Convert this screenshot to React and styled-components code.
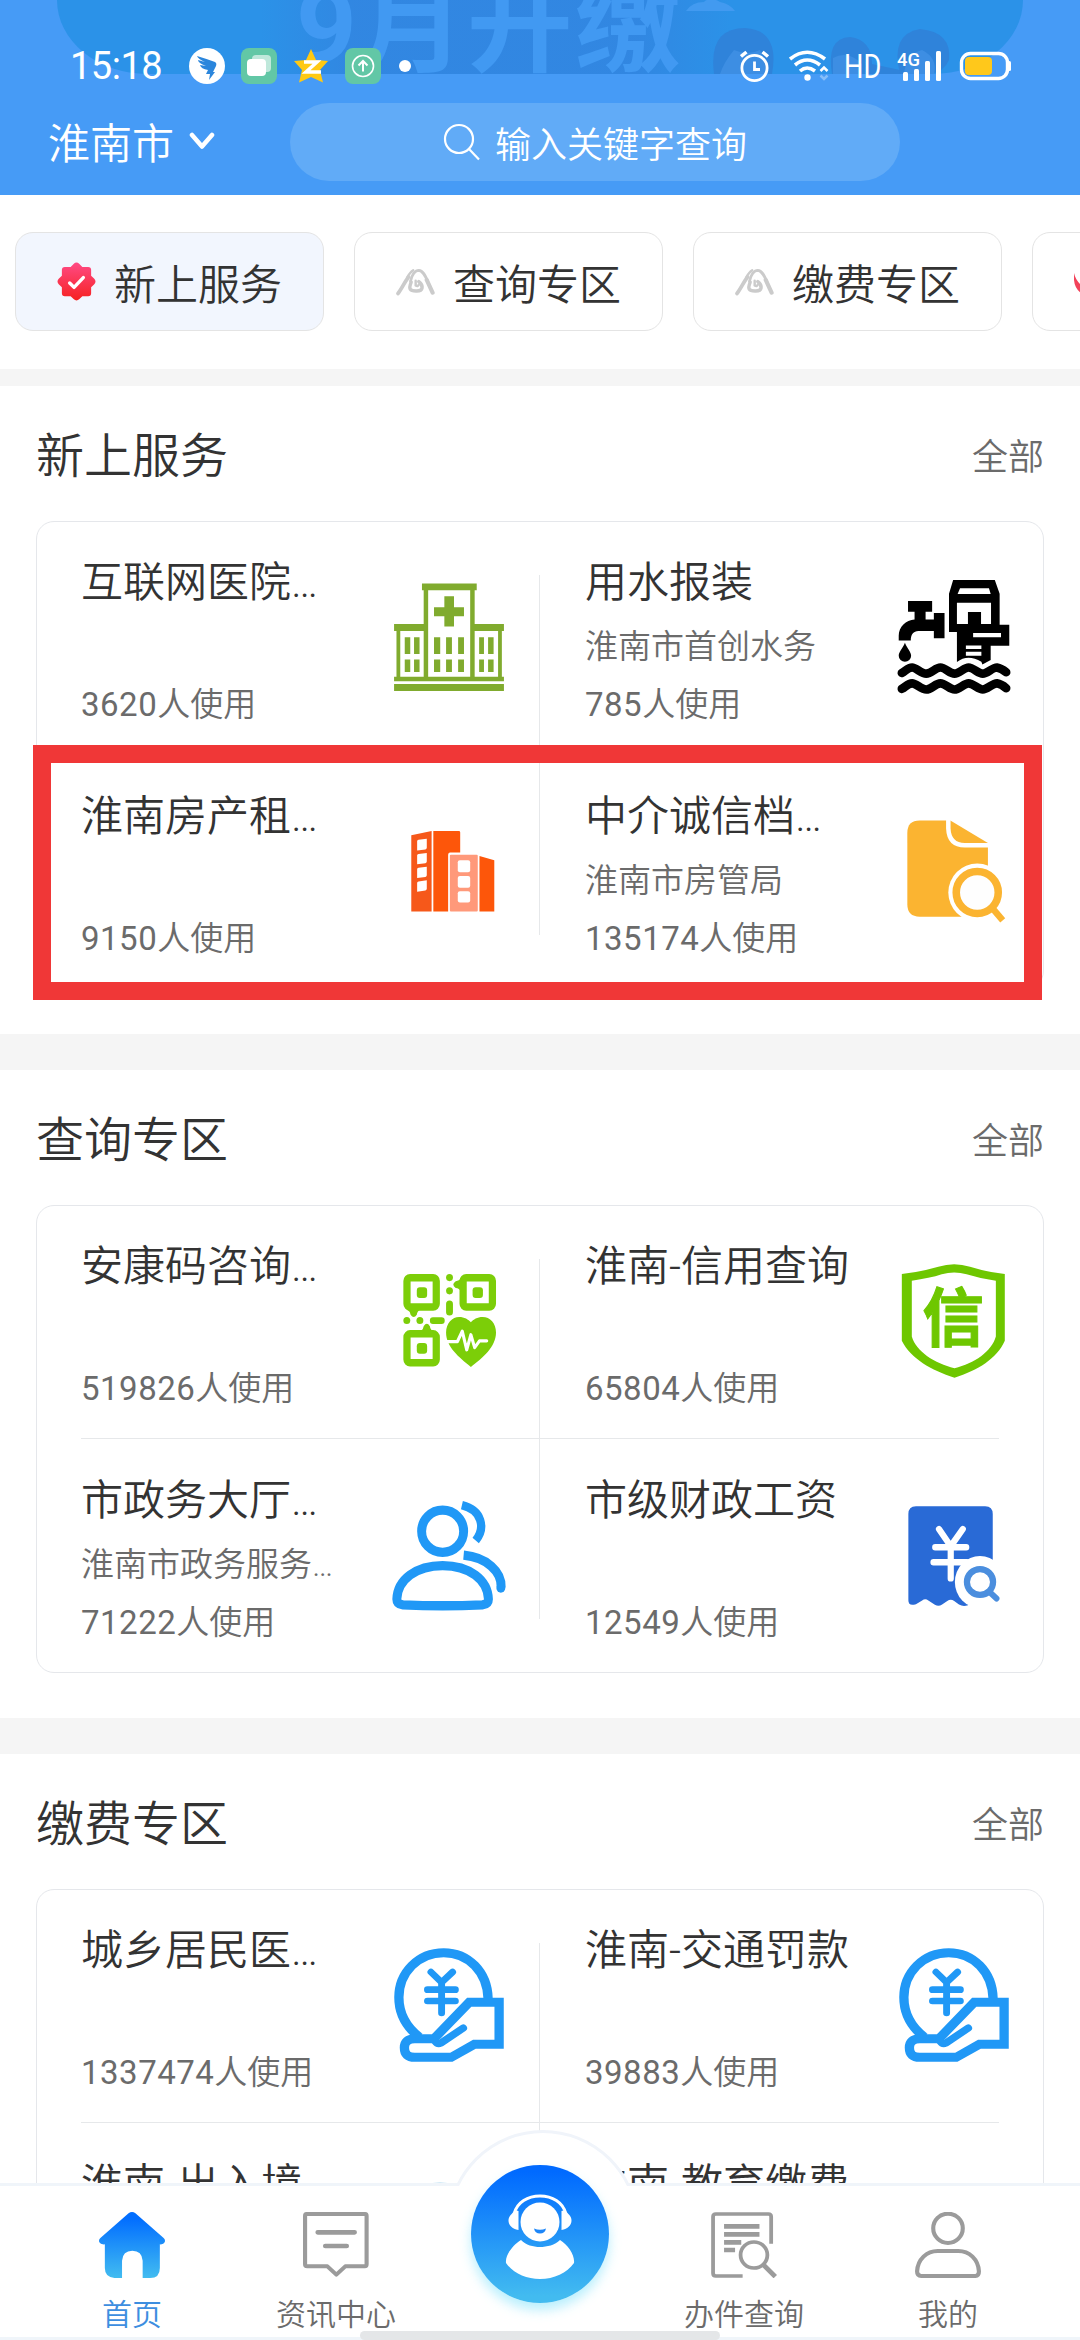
import React from 'react'
import styled, { createGlobalStyle } from 'styled-components'

const sections = [
  {
    title: '新上服务',
    marked: true,
    items: [
      { name: '互联网医院…', count: '3620', icon: 'hospital' },
      { name: '用水报装', dept: '淮南市首创水务', count: '785', icon: 'water' },
      { name: '淮南房产租…', count: '9150', icon: 'building' },
      { name: '中介诚信档…', dept: '淮南市房管局', count: '135174', icon: 'archive' },
    ],
  },
  {
    title: '查询专区',
    items: [
      { name: '安康码咨询…', count: '519826', icon: 'qrcode' },
      { name: '淮南-信用查询', count: '65804', icon: 'shield' },
      { name: '市政务大厅…', dept: '淮南市政务服务…', count: '71222', icon: 'users' },
      { name: '市级财政工资', count: '12549', icon: 'salary' },
    ],
  },
  {
    title: '缴费专区',
    items: [
      { name: '城乡居民医…', count: '1337474', icon: 'pay' },
      { name: '淮南-交通罚款', count: '39883', icon: 'pay' },
      { name: '淮南-出入境', icon: 'globe' },
      { name: '淮南-教育缴费' },
    ],
  },
]

const tabs = [
  { label: '新上服务', icon: 'seal', active: true },
  { label: '查询专区', icon: 'peak' },
  { label: '缴费专区', icon: 'peak' },
  { label: '', icon: 'swirl' },
]

const serviceIcons = {
  hospital: (
    <svg viewBox="0 0 331 331">
      <g fill="#80ab2e">
        <path d="M87 10h159v20H87zM92 30h13v251H92zM227 30h13v251h-13zM6 128h86v20H6zM240 128h85v20h-85zM13 148h11v133H13zM308 148h11v133h-11zM6 281h319v13H6zM6 302h319v20H6z" />
        <path d="M152 47h28v32h29v26h-29v30h-28v-30h-30V79h30z" />
        <path d="M122 166h18v49h-18zM157 166h17v49h-17zM192 166h17v49h-17zM122 231h18v36h-18zM157 231h17v36h-17zM192 231h17v36h-17z" />
        <path d="M37 166h16v49H37zM64 166h16v49H64zM37 231h16v36H37zM64 231h16v36H64zM253 166h14v49h-14zM279 166h16v49h-16zM253 231h14v36h-14zM279 231h16v36h-16z" />
      </g>
    </svg>
  ),
  water: (
    <svg viewBox="0 0 331 331">
      <path d="M32 61h70v31H83v23h24V96h31v73h-31v-21H62C48 148 40 158 40 176H5v-14C5 136 26 117 51 115V92H32z" />
      <path d="M23 182C30 200 41 208 41 220A18 17 0 0 1 5 220C5 208 16 200 23 182z" />
      <path
        fillRule="evenodd"
        d="M163 0H284L298 40V130H326V191H272V232L248 245L245 237Q205 214 174 238V151H151V40zM183 24L176 41H272L267 24zM174 66V128H206V93H244V128H273V66zM221 154V166H302V154zM200 190V200H245V190zM200 208V220H245V208z"
      />
      <g fill="none" stroke="#000" strokeWidth="25" strokeLinecap="round">
        <path d="M14 270C25 264 32 254 44 254S70 272 85 272 112 254 126 254 153 272 167 272 195 254 208 254 236 272 249 272 277 254 290 254Q303 256 317 268" />
        <path d="M14 316C25 310 32 300 44 300S70 318 85 318 112 300 126 300 153 318 167 318 195 300 208 300 236 318 249 318 277 300 290 300Q303 302 317 314" />
      </g>
    </svg>
  ),
  building: (
    <svg viewBox="0 0 331 331">
      <path fill="#f6581a" d="M56 62L115 49V283H56z" />
      <path fill="#fd560a" d="M120 49H194Q198 49 198 53V112H168Q163 113 163 118V283H120zM254 122L297 134V283H254z" />
      <rect x="168" y="118" width="81" height="165" rx="3" fill="#ff997a" />
      <g fill="#fff">
        <path d="M73 79Q73 76 77 75L101 72V98Q101 102 97 103L73 106zM73 120Q73 117 77 116L101 113V138Q101 142 97 143L73 146zM73 160Q73 157 77 156L101 153V178Q101 182 97 183L73 186zM73 200Q73 197 77 196L101 192V217Q101 221 97 222L73 226z" />
        <rect x="191" y="134" width="36" height="35" rx="6" />
        <rect x="191" y="180" width="36" height="34" rx="6" />
        <rect x="191" y="224" width="36" height="33" rx="6" />
      </g>
    </svg>
  ),
  archive: (
    <svg viewBox="0 0 331 331">
      <path fill="#fbb431" d="M66 19H155L264 84V298H66Q30 298 30 262V55Q30 19 66 19z" />
      <path fill="none" stroke="#fff" strokeWidth="13" d="M149 12V42Q151 91 197 91H270" />
      <circle cx="233" cy="228" r="84" fill="#fff" />
      <circle cx="233" cy="228" r="61" fill="#fefefe" stroke="#fbb431" strokeWidth="22" />
      <path stroke="#fbb431" strokeWidth="19" d="M278 275L307 309" />
    </svg>
  ),
  qrcode: (
    <svg viewBox="0 0 331 319" preserveAspectRatio="none">
      <g fill="none" stroke="#7cce08" strokeWidth="21">
        <rect x="43.500" y="38.500" width="85" height="82" rx="9" />
        <rect x="206.500" y="38.500" width="85" height="82" rx="9" />
        <rect x="43.500" y="195.500" width="85" height="81" rx="9" />
      </g>
      <g fill="#7cce08">
        <rect x="72" y="65" width="30" height="30" rx="9" />
        <rect x="234" y="65" width="30" height="30" rx="9" />
        <rect x="72" y="221" width="30" height="30" rx="9" />
        <circle cx="167" cy="38" r="10" />
        <circle cx="167" cy="75" r="10" />
        <rect x="157" y="102" width="20" height="42" rx="10" />
        <circle cx="43" cy="158" r="10" />
        <circle cx="81" cy="158" r="10" />
        <rect x="110" y="149" width="43" height="19" rx="9" />
        <path d="M42 126H84Q73 132 72 142Q63 155 54 142Q52 132 42 126zM82 190H122Q111 184 110 174Q101 161 92 174Q91 184 82 190zM201 38V78Q195 67 185 67Q171 57 185 48Q195 48 201 38z" />
        <path d="M229 288C195 262 157 232 157 192 157 165 175 148 195 148 210 148 222 155 229 163 236 155 248 148 263 148 285 148 302 165 302 192 302 232 262 265 229 288z" />
      </g>
      <path
        fill="none"
        stroke="#fff"
        strokeWidth="9"
        strokeLinecap="round"
        strokeLinejoin="round"
        d="M160 217H190L204 188 217 240 229 198 240 234 254 215H275"
      />
    </svg>
  ),
  shield: (
    <svg viewBox="0 0 331 319" preserveAspectRatio="none">
      <path fill="#6ec700" d="M14 28Q70 22 120 8Q166 -6 212 8Q262 23 313 28V215C290 265 235 298 167 318 100 298 40 265 14 215z" />
      <path fill="#fff" d="M43 47Q95 40 130 29Q166 18 202 29Q245 42 287 47V203C275 245 225 278 167 292 110 278 55 245 43 203z" />
      <text
        x="163"
        y="216"
        textAnchor="middle"
        fontSize="178"
        fontWeight="700"
        fontFamily="'Noto Sans CJK SC', sans-serif"
        fill="#6ec700"
        stroke="#6ec700"
        strokeWidth="3"
      >
        信
      </text>
    </svg>
  ),
  users: (
    <svg viewBox="0 0 331 319" preserveAspectRatio="none">
      <g fill="none" stroke="#2098f6" strokeWidth="26">
        <ellipse cx="147" cy="93" rx="61" ry="59" />
        <path d="M14 283C16 228 70 189 147 189S278 228 280 283Q280 297 262 299Q147 304 32 299Q14 297 14 283z" />
        <path strokeWidth="24" d="M203 20C262 34 272 84 243 119" />
        <path d="M208 160C275 166 319 206 317 250" />
      </g>
      <circle cx="316" cy="252" r="13" fill="#2098f6" />
    </svg>
  ),
  salary: (
    <svg viewBox="0 0 331 319" preserveAspectRatio="none">
      <path
        fill="#296ad6"
        d="M55 23H256Q278 23 278 45V240L206 300Q192 305 180 298L166 288Q156 281 146 288L131 298Q121 305 110 299L91 287Q82 280 73 287L55 297Q33 304 33 286V45Q33 23 55 23z"
      />
      <path
        fill="none"
        stroke="#fff"
        strokeWidth="18"
        strokeLinecap="round"
        strokeLinejoin="round"
        d="M122 87L156 135 191 87M156 135V225M111 138H201M106 180H203"
      />
      <circle cx="241" cy="235" r="73" fill="#fff" />
      <ellipse cx="241" cy="235" rx="38" ry="36" fill="none" stroke="#4b8ede" strokeWidth="18" />
      <path stroke="#4b8ede" strokeWidth="17" strokeLinecap="round" d="M268 262L289 281" />
    </svg>
  ),
  pay: (
    <svg viewBox="0 0 331 342" preserveAspectRatio="none">
      <g fill="none" stroke="#2098f6" strokeWidth="27">
        <path d="M279 152C277 72 222 14 150 14 76 14 20 74 20 148 20 200 45 240 80 268" />
        <path d="M66 272H122L224 163H311V289H239L172 328H66Q36 328 36 299Q36 273 66 272z" />
        <path strokeWidth="22" strokeLinecap="round" d="M124 278Q132 290 142 285L207 240" />
        <path strokeWidth="20" strokeLinecap="round" d="M113 72L144 103 176 72M144 103V195M103 125H184M103 159H184" />
      </g>
    </svg>
  ),
  globe: (
    <svg viewBox="0 0 114 114">
      <circle cx="48" cy="57.500" r="57" fill="#a9d6ee" />
    </svg>
  ),
}

const tabIcons = {
  seal: (
    <svg viewBox="0 0 40 40">
      <defs>
        <linearGradient id="seal" x1="0" y1="0" x2="0" y2="40" gradientUnits="userSpaceOnUse">
          <stop offset="0" stopColor="#ff4b87" />
          <stop offset="1" stopColor="#f6211f" />
        </linearGradient>
      </defs>
      <path
        fill="url(#seal)"
        d="M17 2Q20 -1 23 2L26 5H32Q35 5 35 8V14L38 17Q41 20 38 23L35 26V32Q35 35 32 35H26L23 38Q20 41 17 38L14 35H8Q5 35 5 32V26L2 23Q-1 20 2 17L5 14V8Q5 5 8 5H14z"
      />
      <path fill="none" stroke="#fff" strokeWidth="3.500" strokeLinecap="round" strokeLinejoin="round" d="M13 21.500L17.500 26 27 16" />
    </svg>
  ),
  peak: (
    <svg viewBox="0 -20 113 113">
      <g fill="none" stroke="#cbcbcb" strokeLinecap="round">
        <path strokeWidth="11" d="M6 71C16 58 24 40 36 24" />
        <path strokeWidth="7" d="M32 26Q40 10 50 4" />
        <path strokeWidth="8" d="M42 36C46 16 56 4 66 4 78 5 84 18 92 36" />
        <path strokeWidth="12" d="M89 32L106 69" />
        <path strokeWidth="10" d="M44 38C36 58 40 64 58 64 80 65 80 48 66 37" />
        <path strokeWidth="7" d="M57 34V48Q63 52 66 46" />
      </g>
    </svg>
  ),
  swirl: (
    <svg viewBox="0 0 39 39">
      <path d="M0 11Q2 20 10 25L22 31 14 35Q1 30 0 18z" fill="#f2435a" />
    </svg>
  ),
}

const navIcons = {
  home: (
    <svg viewBox="0 0 192 198" preserveAspectRatio="none">
      <defs>
        <linearGradient id="home" x1="0" y1="0" x2="0" y2="1">
          <stop offset="0.100" stopColor="#026eff" />
          <stop offset="1" stopColor="#42bcf0" />
        </linearGradient>
      </defs>
      <path
        fill="url(#home)"
        d="M86 4Q96 -4 106 4L188 78Q194 84 191 91Q188 98 177 97V168Q177 198 149 198H127V146Q125 116 97 116Q69 116 67 146V198H45Q17 196 17 168V97Q4 98 1 91Q-2 84 4 78z"
      />
    </svg>
  ),
  news: (
    <svg viewBox="0 0 192 198" preserveAspectRatio="none">
      <g fill="none" stroke="#9b9b9b" strokeWidth="12" strokeLinejoin="round">
        <path d="M10 6H181Q185 6 185 12V156Q185 163 180 163H123L97 188 71 163H12Q6 163 6 156V12Q6 6 10 6z" />
        <path strokeWidth="14" strokeLinecap="round" d="M43 61H150M65 102H127" />
      </g>
    </svg>
  ),
  search: (
    <svg viewBox="0 0 192 198" preserveAspectRatio="none">
      <g fill="none" stroke="#9b9b9b" strokeWidth="11">
        <path d="M175 95V14Q175 6 167 6H14Q6 6 6 14V184Q6 192 14 192H92" />
        <path strokeWidth="14" d="M38 43H141M38 67H141M38 91H88M38 114H70" />
        <circle cx="125" cy="129" r="39" />
        <path strokeWidth="14" d="M152 158L187 194" />
      </g>
    </svg>
  ),
  mine: (
    <svg viewBox="0 0 192 198" preserveAspectRatio="none">
      <g fill="none" stroke="#9b9b9b" strokeWidth="12">
        <ellipse cx="96" cy="49" rx="43" ry="44" />
        <path d="M6 178C8 142 34 117 66 117H126C158 117 184 142 186 178Q186 192 176 192H18Q6 192 6 178z" />
      </g>
    </svg>
  ),
}

const StatusLeft = () => (
  <StatusGroup $gap={16}>
    <Clock>15:18</Clock>
    <svg width="36" height="36" viewBox="0 0 36 36">
      <circle cx="18" cy="18" r="18" fill="#fff" />
      <path fill="#2b86dc" d="M8 8Q18 11 26 14Q28 15 27 18L24 24H26L20 32 21 26H17L19 22Q12 21 11 17L17 18Q9 15 9 12L16 14Q9 11 8 8z" />
    </svg>
    <svg width="36" height="36" viewBox="0 0 36 36">
      <rect width="36" height="36" rx="8" fill="#62c7a6" />
      <rect x="11" y="7" width="19" height="17" rx="4" fill="#bfe8db" />
      <rect x="6" y="11" width="19" height="17" rx="4" fill="#fff" />
    </svg>
    <svg width="36" height="36" viewBox="0 0 36 36">
      <path fill="#ffc913" d="M18 1L23 12 35 13 27 22 30 34.500 18 29 6 34.500 9 22 1 13 13 12z" />
      <path fill="none" stroke="#fff" strokeWidth="3.500" d="M11 14H24L13 24H28" />
    </svg>
    <svg width="36" height="36" viewBox="0 0 36 36">
      <rect width="36" height="36" rx="8" fill="#62c7a6" />
      <circle cx="18" cy="18" r="10.500" fill="none" stroke="#fff" strokeWidth="1.600" />
      <path fill="none" stroke="#fff" strokeWidth="2" d="M18 23.500V13.500M13.500 17.500L18 13 22.500 17.500" />
    </svg>
    <svg width="16" height="12" viewBox="0 0 16 12">
      <circle cx="8" cy="6" r="6" fill="#fff" />
    </svg>
  </StatusGroup>
)

const StatusRight = () => (
  <StatusGroup $gap={0}>
    <svg width="49" height="32" viewBox="0 0 49 32">
      <g fill="none" stroke="#fff" strokeWidth="2.800">
        <circle cx="14.500" cy="18" r="12.600" />
        <path d="M1 6.500L6.500 2M22.500 2L28 6.500" strokeWidth="3.500" />
        <path d="M14.500 11.500V19.500H20" />
      </g>
    </svg>
    <svg width="55" height="32" viewBox="0 0 55 32">
      <g fill="none" stroke="#fff" strokeWidth="3.600">
        <path d="M1 9Q18 -4.500 36 9" />
        <path d="M6 15Q18 5 31 15" />
        <path d="M11 21Q18 15 26 21" />
        <path d="M31.500 21L35 17.500 38.500 21" strokeWidth="2.500" />
        <path d="M31.500 25.500L35 29 38.500 25.500" strokeWidth="2.500" opacity="0.350" />
      </g>
      <circle cx="18.500" cy="27.500" r="3.200" fill="#fff" />
    </svg>
    <Hd>HD</Hd>
    <svg width="45" height="32" viewBox="0 0 45 32">
      <text x="0" y="15.500" fontSize="19" fontFamily="Roboto, sans-serif" fontWeight="500" fill="#fff" textLength="23" lengthAdjust="spacingAndGlyphs">
        4G
      </text>
      <g fill="#fff">
        <rect x="6" y="22" width="5" height="9" rx="1.500" />
        <rect x="17" y="19" width="5" height="12" rx="1.500" />
        <rect x="28" y="11" width="5" height="20" rx="1.500" />
        <rect x="39" y="1" width="5" height="30" rx="1.500" />
      </g>
    </svg>
    <svg width="69" height="32" viewBox="0 0 69 32">
      <rect x="19.500" y="3.500" width="46" height="25" rx="9" fill="none" stroke="#fff" strokeWidth="3.400" />
      <rect x="66" y="11" width="3" height="10" rx="1.500" fill="#fff" />
      <rect x="23" y="7" width="27" height="18" rx="4" fill="#ffc81b" />
    </svg>
  </StatusGroup>
)

const ServiceCell = ({ item, row, right }) => (
  <Cell $row={row} $right={right}>
    <CellText>
      <Name>{item.name}</Name>
      <Dept>{item.dept}</Dept>
      {item.count && (
        <Count>
          <span>{item.count}</span>人使用
        </Count>
      )}
    </CellText>
    {item.icon && <CellIcon>{serviceIcons[item.icon]}</CellIcon>}
  </Cell>
)

const ServiceSection = ({ section }) => {
  const [a, b, c, d] = section.items

  return (
    <Section>
      <SectionHead>
        <h2>{section.title}</h2>
        <a>全部</a>
      </SectionHead>
      <Card>
        <RowLine />
        <ColumnLine />
        <ServiceCell item={a} row={1} />
        <ServiceCell item={b} row={1} right />
        <ServiceCell item={c} row={3} />
        <ServiceCell item={d} row={3} right />
        {section.marked && <Marker />}
      </Card>
    </Section>
  )
}

const NavItem = ({ icon, label, active }) => (
  <NavLink $active={active}>
    {navIcons[icon]}
    <span>{label}</span>
  </NavLink>
)

const App = () => {
  return (
    <Page>
      <GlobalStyle />
      <Header>
        <Banner>
          <svg width="966" height="74" viewBox="57 0 966 74">
            <defs>
              <linearGradient id="glow">
                <stop offset="0" stopColor="#3384e0" stopOpacity="0" />
                <stop offset="0.200" stopColor="#3384e0" stopOpacity="0.800" />
                <stop offset="0.800" stopColor="#3384e0" stopOpacity="0.800" />
                <stop offset="1" stopColor="#3384e0" stopOpacity="0" />
              </linearGradient>
            </defs>
            <rect x="260" y="0" width="470" height="74" fill="url(#glow)" />
            <path fill="#429af0" d="M686 11Q692 2 704 2Q710 -4 720 2Q730 4 735 11z" />
            <g fill="#2f83da">
              <path d="M714 74Q708 28 745 28Q780 30 772 74z" />
              <path d="M832 74Q826 38 850 37Q872 40 872 64L900 70V74z" />
              <path d="M900 74Q890 34 920 29Q952 32 949 60Q944 72 930 74z" />
            </g>
            <g fill="#3d8ee3">
              <path d="M720 74Q724 62 734 50Q748 56 760 50L768 74z" />
              <path d="M833 74V58Q848 50 862 64V74z" />
              <path d="M904 74Q906 54 922 50Q938 58 934 74z" />
            </g>
          </svg>
          <Slogan>9月开缴</Slogan>
        </Banner>
        <StatusBar>
          <StatusLeft />
          <StatusRight />
        </StatusBar>
        <SearchRow>
          <City>
            淮南市
            <svg width="26" height="18" viewBox="0 0 26 18">
              <path fill="none" stroke="#fff" strokeWidth="4.500" strokeLinecap="round" strokeLinejoin="round" d="M3 3L13 14.500 23 3" />
            </svg>
          </City>
          <SearchBox>
            <svg width="38" height="38" viewBox="0 0 38 38">
              <g fill="none" stroke="#fff" strokeWidth="2.200">
                <circle cx="16" cy="16" r="14" />
                <path d="M26 26L36 36.500" />
              </g>
            </svg>
            输入关键字查询
          </SearchBox>
        </SearchRow>
      </Header>

      <Main>
        <Tabs>
          {tabs.map(tab => (
            <Tab key={tab.label} $active={tab.active}>
              {tabIcons[tab.icon]}
              {tab.label}
            </Tab>
          ))}
        </Tabs>
        {sections.map(section => (
          <ServiceSection key={section.title} section={section} />
        ))}
      </Main>

      <Nav>
        <NavItem icon="home" label="首页" active />
        <NavItem icon="news" label="资讯中心" />
        <Arch />
        <AgentButton>
          <svg width="138" height="138" viewBox="0 0 138 138">
            <g fill="#fff">
              <circle cx="69" cy="57" r="19.500" />
              <path d="M47.500 46V65C41 64 37.500 60 37.500 55.500C37.500 51 41 49 44 45zM90.500 46V65C97 64 100.500 60 100.500 55.500C100.500 51 97 49 94 45z" />
              <path d="M50 75C42 80 34 90 35 98 42 108 55 114 69 114S96 108 103 98C104 90 97 80 89 75 84 80 76 82 69 82S55 80 50 75z" />
            </g>
            <path fill="none" stroke="#fff" strokeWidth="3" d="M43 49C46 37 57 31 69 31S92 37 95 49" />
            <path fill="#1c86f8" d="M63 63.500Q69 66 75 63.500Q74 68.500 69 68.500T63 63.500z" />
          </svg>
        </AgentButton>
        <NavItem icon="search" label="办件查询" />
        <NavItem icon="mine" label="我的" />
        <GestureBar />
      </Nav>
    </Page>
  )
}

const GlobalStyle = createGlobalStyle`
  * {
    box-sizing: border-box;
  }

  body {
    margin: 0;
    background-color: #fff;
    font-family: Roboto, 'Noto Sans CJK SC', sans-serif;
    font-weight: 350;
    color: #333;
  }

  svg {
    display: block;
    flex-shrink: 0;
  }
`

const Page = styled.div`
  display: flex;
  flex-direction: column;
  width: 1080px;
  height: 2340px;
  overflow: hidden;
`

const Header = styled.header`
  position: relative;
  height: 195px;
  flex-shrink: 0;
  background-color: #469bf6;
  color: #fff;
`

const Banner = styled.div`
  position: absolute;
  top: 0;
  left: 57px;
  width: 966px;
  height: 74px;
  overflow: hidden;
  border-radius: 0 0 90px 90px / 0 0 74px 74px;
  background-color: #2b92e8;
`

const Slogan = styled.div`
  position: absolute;
  top: -48px;
  left: 239px;
  font-size: 106px;
  line-height: 150px;
  font-weight: 700;
  letter-spacing: 2px;
  white-space: nowrap;
  color: #4199f2;
`

const StatusBar = styled.div`
  position: relative;
  display: flex;
  justify-content: space-between;
  height: 96px;
  padding: 36px 69px 0 70px;
`

const StatusGroup = styled.div`
  display: flex;
  align-items: center;
  gap: ${props => props.$gap}px;
  height: 60px;
`

const Clock = styled.span`
  width: 103px;
  font-size: 38px;
  font-weight: 400;
  letter-spacing: -0.5px;
`

const Hd = styled.span`
  width: 53px;
  font-size: 34px;
  font-weight: 400;
  transform: scaleX(0.8);
  transform-origin: left center;
`

const SearchRow = styled.div`
  position: relative;
  display: flex;
  align-items: center;
  padding: 7px 0 0 48px;
`

const City = styled.div`
  display: flex;
  align-items: center;
  gap: 15px;
  width: 242px;
  padding-bottom: 3px;
  font-size: 42px;
`

const SearchBox = styled.div`
  display: flex;
  align-items: center;
  justify-content: center;
  gap: 14px;
  width: 610px;
  height: 78px;
  border-radius: 39px;
  background-color: #61abf7;
  font-size: 36px;
`

const Main = styled.main`
  flex: 1;
  min-height: 0;
  overflow: hidden;
`

const Tabs = styled.div`
  display: flex;
  gap: 30px;
  height: 191px;
  padding: 37px 0 0 15px;
  overflow: hidden;
  border-bottom: 17px solid #f5f5f5;
`

const Tab = styled.div`
  display: flex;
  flex-shrink: 0;
  align-items: center;
  gap: 18px;
  width: 309px;
  height: 99px;
  padding: 0 0 1px 41px;
  border: 1px solid #e4e4e4;
  border-radius: 18px;
  background-color: ${props => (props.$active ? '#f2f6fe' : '#fff')};
  font-size: 42px;
  white-space: nowrap;

  svg {
    width: 39px;
    height: 39px;
  }
`

const Section = styled.section`
  height: 684px;
  padding: 0 36px;
  border-bottom: 36px solid #f5f5f5;
`

const SectionHead = styled.div`
  display: flex;
  align-items: center;
  justify-content: space-between;
  height: 135px;

  h2 {
    margin: -3px 0 0;
    font-size: 48px;
    font-weight: 350;
  }

  a {
    font-size: 36px;
    color: #6b6b6b;
  }
`

const Card = styled.div`
  position: relative;
  display: grid;
  grid-template-columns: 502px 1px 503px;
  grid-template-rows: 232px 1px 233px;
  height: 468px;
  border: 1px solid #e5e7eb;
  border-radius: 18px;
`

const RowLine = styled.div`
  grid-area: 2 / 1 / 3 / -1;
  margin: 0 44px;
  background-color: #e6e8ea;
`

const ColumnLine = styled.div`
  grid-area: 1 / 2 / -1 / 3;
  margin: 53px 0;
  background-color: #e6e8ea;
`

// Red frame around the second row of the card
const Marker = styled.div`
  position: absolute;
  top: 222.5px;
  left: -4.5px;
  width: 1009.5px;
  height: 255px;
  border: 18px solid #f03737;
`

const Cell = styled.div`
  display: flex;
  grid-row: ${props => props.$row};
  grid-column: ${props => (props.$right ? 3 : 1)};
  align-self: end;
  justify-content: space-between;
  height: 232px;
  padding: ${props => (props.$right ? '0 32px 0 45px' : '0 33px 0 44px')};
`

const CellText = styled.div`
  display: grid;
  grid-template-rows: 60px 60px 60px;
  align-content: start;
  align-items: center;
  padding-top: 27px;
  white-space: nowrap;
`

const Name = styled.div`
  padding-top: 7px;
  font-size: 42px;
  line-height: 60px;
`

const Dept = styled.div`
  padding-top: 10px;
  font-size: 33px;
  color: #6b6b6b;
`

const Count = styled.div`
  padding-top: 6px;
  font-size: 33px;
  color: #6b6b6b;

  span {
    font-weight: 400;
    letter-spacing: 0.5px;
  }
`

const CellIcon = styled.div`
  padding-top: 58px;

  svg {
    width: 114px;
    height: 114px;
    overflow: visible;
  }
`

const Nav = styled.nav`
  position: relative;
  display: flex;
  flex-shrink: 0;
  height: 157px;
  padding: 0 30px;
  border-top: 3px solid #f0f5fa;
  border-bottom: 3px solid #f0f5fa;
  background-color: #fff;
`

const NavLink = styled.a`
  display: flex;
  flex-direction: column;
  align-items: center;
  width: 204px;
  padding-top: 26px;
  font-size: 30px;
  color: ${props => (props.$active ? '#3d8ee0' : '#6b6b6b')};

  svg {
    width: 66px;
    height: 66px;
  }

  span {
    margin-top: 15px;
    line-height: 44px;
  }
`

const Arch = styled.div`
  position: absolute;
  top: -56px;
  left: 447px;
  width: 186px;
  height: 56px;
  overflow: hidden;

  &::before {
    content: '';
    display: block;
    width: 186px;
    height: 186px;
    border: 3px solid #f0f4fa;
    border-radius: 50%;
    background-color: #fff;
  }
`

const AgentButton = styled.div`
  position: relative;
  width: 138px;
  height: 138px;
  margin: -21px 33px 0;
  border-radius: 50%;
  background: linear-gradient(#006aff 5%, #42bbf0 95%);
  box-shadow: 0 7px 12px rgba(80, 215, 250, 0.4);
`

const GestureBar = styled.div`
  position: absolute;
  bottom: -3px;
  left: 360px;
  width: 360px;
  height: 9px;
  border-radius: 5px;
  background-color: #e4e6e8;
`

export default App
